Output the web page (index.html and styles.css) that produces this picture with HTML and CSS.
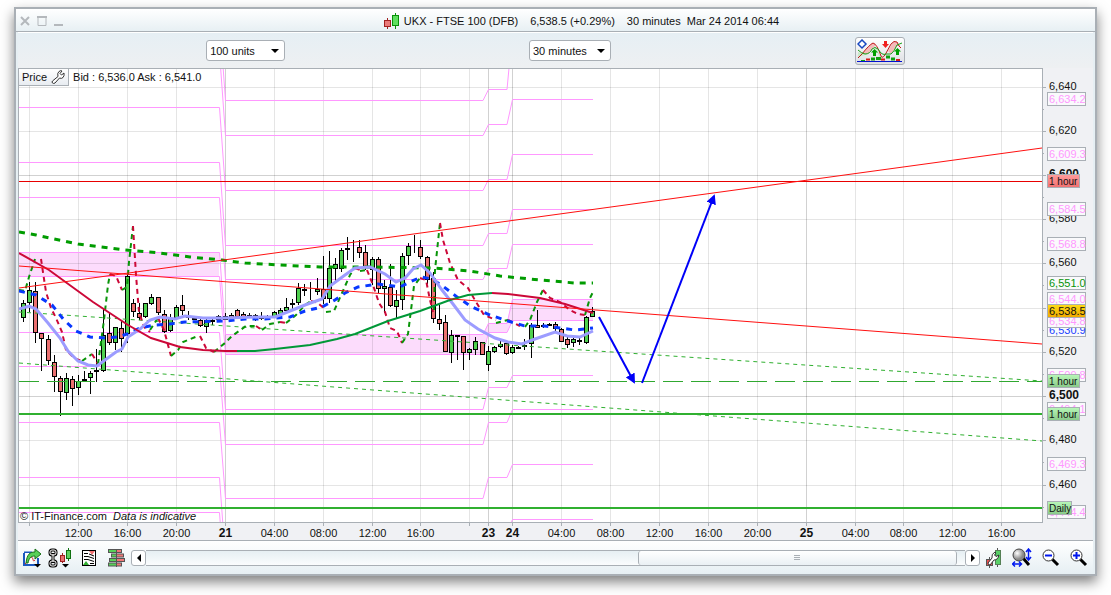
FILE: index.html
```html
<!DOCTYPE html>
<html lang="en">
<head>
  <meta charset="UTF-8" />
  <meta name="viewport" content="width=device-width, initial-scale=1.0" />
  <title>UKX - FTSE 100 (DFB)</title>
  <link rel="stylesheet" href="styles.css">
</head>
<body>
  <div class="window">
    <header class="titlebar">
      <div class="window-buttons">
        <button aria-label="Close"><svg width="10" height="10"><path d="M1 1L9 9M9 1L1 9" stroke-width="2" /></svg></button>
        <button aria-label="Maximize"><svg width="10" height="10"><path d="M1 .5V9.500H9V.5M.5 1H9.500" stroke-width="1" /><path d="M0 1H10" stroke-width="2" /></svg></button>
        <button aria-label="Minimize"><svg width="10" height="10"><path d="M0 9H9" stroke-width="2" /></svg></button>
      </div>
      <h1>
        <svg width="16" height="16">
          <path d="M3.500 5V16" stroke="#a02020" />
          <rect x=".5" y="7.500" width="6" height="6" fill="#ea7a7a" stroke="#a02020" />
          <path d="M11.500 0V16" stroke="#089008" />
          <rect x="8.500" y="2.500" width="6" height="10" fill="#5ee05e" stroke="#089008" />
        </svg>
        <span>UKX - FTSE 100 (DFB)</span>
        <span>6,538.5 (+0.29%)</span>
        <span>30 minutes&nbsp; Mar 24 2014 06:44</span>
      </h1>
    </header>

    <div class="toolbar">
      <div class="select units">
        <select aria-label="Units">
          <option>100 units</option>
          <option>200 units</option>
        </select>
      </div>
      <div class="select period">
        <select aria-label="Period">
          <option>30 minutes</option>
          <option>1 hour</option>
        </select>
      </div>
      <button class="indicators" aria-label="Indicators">
        <svg width="46" height="24" viewBox="0 0 46 24">
          <path d="M1 13L7 15L11 15L15 10L18 7L24 18L29 15L24 20L17 8L11 15L5 17L1 18Z" fill="#c8e8c8" />
          <path d="M5 15L15 4L19 5L17 8L11 15L8 15ZM31 12L36 3L40 3L43 7L40 7L36 13L34 15Z" fill="#f4baba" />
          <path d="M1 19L5 15Q12 6 16 4Q20 5 24 17Q25 20 28 16L34 5Q37 1 40 3Q42 8 44 9" fill="none" stroke="#c01818" />
          <path d="M1 11Q4 14 8 15Q13 15 15 10Q18 7 21 10Q25 17 29 15L34 15Q37 13 40 6L45 4" fill="none" stroke="#18a018" />
          <path d="M1 5L5 1L9 5L5 9Z" fill="#fff" stroke="#1848c0" stroke-width="1.5" />
          <path d="M17.500 10L21 13.500H19V17H16V13.500H14ZM40.500 9L44 12.500H42V16H39V12.500H37Z" fill="#00a000" />
          <path d="M27 2H30V5H32L28.500 9L25 5H27Z" fill="#f02020" />
          <path d="M14 20H18M19 19.500H24M29 18H33M34 20H38" stroke="#10a010" stroke-width="3" />
          <path d="M4 21.500H8" stroke="#10a010" />
          <path d="M9 20.500H13M24 20.500H28M39 21H43" stroke="#d81818" stroke-width="2" />
          <path d="M0 22.500H45" stroke="#0010d0" />
        </svg>
      </button>
    </div>

    <main class="chart-area">
      <svg id="chart" class="chart" viewBox="18 68 1075 472" role="img" aria-label="FTSE 100 price chart"></svg>
      <div class="price-bar">
        <button class="price-btn">Price
          <svg width="14" height="14" viewBox="0 0 14 14"><path d="M1.500 11L7 6.500Q6 3 8 1.500T11 1L9 3.500L10.500 5L13 3Q13.500 6 12 7.500T8.500 8L4 13Q2.500 14 1.500 13T1.500 11Z" fill="#fff" stroke="#333" /></svg>
        </button>
        <span>Bid : 6,536.0 Ask : 6,541.0</span>
      </div>
    </main>

    <footer class="bottombar">
      <button class="share" aria-label="Share">
        <svg width="20" height="20" viewBox="0 0 20 20">
          <path d="M1 5V17H15V10M1 4.500H9" fill="none" stroke="#1c58c0" stroke-width="2" />
          <path d="M2 5H10V16H2Z" fill="#fff" />
          <path d="M2 16C5 14 5 9 8 9S9 15 12 12" fill="none" stroke="#d02020" />
          <path d="M3 15C4 6 7 4 12 4V1L18 6L12 11V8C8 8 6 10 5 15Z" fill="#58d058" stroke="#187018" />
          <path d="M11 16H18L14.500 19.500Z" fill="#000" />
        </svg>
      </button>
      <button aria-label="Link charts">
        <svg width="24" height="20" viewBox="0 0 24 20">
          <g fill="none" stroke="#000" stroke-width="3"><rect x="2" y="2" width="6" height="5" rx="2" /><rect x="2" y="13" width="6" height="5" rx="2" /><path d="M5 5V15" /></g>
          <g fill="none" stroke="#fff"><rect x="2" y="2" width="6" height="5" rx="2" /><rect x="2" y="13" width="6" height="5" rx="2" /><path d="M5 6V14" /></g>
          <path d="M14.500 5V15" stroke="#a02020" /><rect x="12.500" y="7.500" width="4" height="6" fill="#ea7070" stroke="#a02020" />
          <path d="M20.500 0V13" stroke="#107010" /><rect x="18.500" y="2.500" width="4" height="8" fill="#5ed05e" stroke="#107010" />
          <path d="M14 16H21L17.500 19.500Z" fill="#000" />
        </svg>
      </button>
      <button aria-label="Order list">
        <svg width="15" height="18" viewBox="0 0 15 18">
          <rect x=".5" y="1.500" width="13" height="15" fill="#fff" stroke="#000" />
          <path d="M7 2H13L10 6Z" fill="#f07070" />
          <path d="M1 16L4 12L7 16Z" fill="#30b030" />
          <path d="M2 4.500H6M2 7.500H6L12 9.500M2 10.500H6L12 12.500M7 5L12 7M8 14.500H12" fill="none" stroke="#000" />
        </svg>
      </button>
      <button aria-label="Order book">
        <svg width="19" height="18" viewBox="0 0 19 18">
          <path d="M1 2H9M4 6.500H9M2 11H9M1 15.500H9" stroke="#555" stroke-width="4" />
          <path d="M10 2H15M10 6.500H17M10 11H18M10 15.500H15" stroke="#555" stroke-width="4" />
          <path d="M2 2H9M5 6.500H9M3 11H9M2 15.500H9" stroke="#58d058" stroke-width="2" />
          <path d="M10 2H14M10 6.500H16M10 11H17M10 15.500H14" stroke="#f07878" stroke-width="2" />
          <path d="M9.500 0V18" stroke="#555" />
        </svg>
      </button>
      <div class="scrollbar">
        <button class="arrow" aria-label="Scroll left"><svg width="6" height="8"><path d="M5 0V8L1 4Z" /></svg></button>
        <div class="track"><div class="thumb"><i></i></div></div>
        <button class="arrow" aria-label="Scroll right"><svg width="6" height="8"><path d="M1 0V8L5 4Z" /></svg></button>
      </div>
      <button aria-label="Chart settings">
        <svg width="16" height="20" viewBox="0 0 16 20">
          <path d="M3.500 9V20M11.500 0V19" stroke="#555" />
          <rect x=".5" y="11.500" width="6" height="6" fill="#e85050" stroke="#555" />
          <rect x="9.500" y="2.500" width="5" height="14" fill="#58d068" stroke="#558055" />
          <path d="M2 15L6 10Q5 6 9 4L10 5L8.500 7L10 8.500L13 7Q12 12 8 12L4 17Q2 17 2 15Z" fill="#fff" stroke="#333" />
        </svg>
      </button>
      <button aria-label="Fit zoom">
        <svg width="20" height="19" viewBox="0 0 20 19">
          <defs><radialGradient id="lens" cx=".35" cy=".35"><stop offset="0" stop-color="#fff" /><stop offset="1" stop-color="#888" /></radialGradient></defs>
          <path d="M11 10L17 17" stroke="#000" stroke-width="3" />
          <circle cx="7" cy="7" r="6" fill="url(#lens)" stroke="#444" />
          <path d="M1 16H9M3 13.500L.5 16L3 18.500M7 13.500L9.500 16L7 18.500M16.500 2V11M14 4L16.500 1L19 4M14 9L16.500 12L19 9" fill="none" stroke="#0018f0" stroke-width="1.500" />
        </svg>
      </button>
      <button aria-label="Zoom out">
        <svg width="18" height="18" viewBox="0 0 18 18"><path d="M10 10L16 16" stroke="#000" stroke-width="3" /><circle cx="6.500" cy="6.500" r="5.500" fill="#fff" stroke="#333" /><path d="M3 6.500H10" stroke="#0018f0" stroke-width="2" /></svg>
      </button>
      <button aria-label="Zoom in">
        <svg width="18" height="18" viewBox="0 0 18 18"><path d="M10 10L16 16" stroke="#000" stroke-width="3" /><circle cx="6.500" cy="6.500" r="5.500" fill="#fff" stroke="#333" /><path d="M3 6.500H10M6.500 3V10" stroke="#0018f0" stroke-width="2" /></svg>
      </button>
    </footer>
  </div>

  <script src="chart.js"></script>
</body>
</html>
```
FILE: chart.js
```js
// x, high, low, body top, body bottom, direction (1 = up)
const candles = [
  [23, 300, 322, 303, 317, 1], [29, 282, 312, 290, 302, 1], [35, 282, 343, 291, 332, 0],
  [41, 333, 371, 333, 338, 0], [48, 335, 365, 339, 360, 0], [54, 355, 392, 362, 376, 0],
  [60, 376, 416, 378, 391, 0], [66, 373, 400, 378, 392, 1], [72, 376, 406, 379, 388, 0],
  [78, 375, 395, 381, 387, 1], [84, 371, 382, 379, 380, 1], [90, 371, 394, 373, 377, 1],
  [96, 349, 382, 370, 371, 1], [103, 309, 372, 335, 370, 1], [109, 313, 345, 333, 342, 0],
  [115, 327, 350, 327, 342, 1], [121, 320, 352, 328, 338, 0], [127, 274, 343, 276, 333, 1],
  [133, 299, 317, 303, 311, 0], [139, 303, 320, 313, 317, 0], [145, 303, 318, 303, 316, 1],
  [151, 294, 305, 297, 303, 1], [158, 297, 315, 297, 312, 0], [164, 310, 333, 314, 331, 0],
  [170, 314, 332, 318, 330, 1], [176, 305, 318, 307, 317, 1], [182, 295, 315, 305, 310, 0],
  [188, 311, 320, 316, 317, 0], [194, 316, 320, 318, 319, 0], [200, 318, 327, 320, 325, 0],
  [206, 318, 333, 320, 326, 1], [212, 317, 325, 320, 321, 0], [218, 315, 321, 316, 319, 1],
  [225, 313, 320, 316, 319, 0], [231, 313, 320, 315, 317, 0], [237, 309, 317, 310, 316, 0],
  [243, 312, 318, 314, 317, 0], [249, 313, 318, 315, 317, 1], [255, 314, 321, 315, 317, 0],
  [261, 312, 320, 317, 318, 1], [267, 315, 319, 316, 317, 0], [274, 311, 318, 312, 317, 1],
  [280, 308, 315, 310, 314, 1], [286, 298, 312, 307, 310, 1], [292, 299, 310, 303, 304, 1],
  [298, 283, 305, 288, 302, 1], [304, 284, 296, 289, 290, 0], [310, 282, 300, 290, 290, 0],
  [317, 278, 295, 289, 291, 1], [323, 256, 304, 289, 298, 0], [329, 251, 303, 268, 298, 1],
  [335, 258, 282, 264, 268, 1], [341, 248, 272, 250, 268, 1], [347, 237, 260, 248, 249, 1],
  [353, 240, 262, 248, 248, 1], [359, 240, 258, 247, 252, 0], [365, 245, 270, 252, 266, 0],
  [372, 257, 285, 259, 269, 1], [378, 257, 293, 259, 288, 0], [384, 280, 313, 286, 288, 1],
  [390, 264, 307, 287, 305, 0], [396, 290, 318, 300, 306, 1], [402, 253, 310, 256, 299, 1],
  [408, 243, 265, 246, 255, 1], [414, 235, 253, 246, 246, 1], [420, 240, 259, 247, 256, 0],
  [427, 256, 284, 257, 279, 0], [433, 272, 323, 278, 318, 0], [439, 305, 330, 319, 323, 0],
  [445, 315, 352, 322, 351, 0], [451, 330, 363, 335, 352, 1], [457, 335, 360, 335, 336, 1],
  [463, 336, 370, 336, 352, 0], [469, 348, 360, 349, 352, 1], [475, 337, 355, 341, 349, 1],
  [482, 342, 355, 342, 354, 0], [488, 346, 371, 351, 364, 1], [494, 346, 353, 347, 351, 1],
  [500, 341, 348, 344, 346, 1], [506, 343, 355, 343, 353, 0], [512, 345, 354, 347, 352, 1],
  [518, 346, 349, 347, 348, 0], [524, 339, 350, 345, 346, 1], [531, 323, 358, 325, 343, 1],
  [537, 310, 328, 325, 327, 0], [543, 323, 328, 325, 326, 1], [549, 323, 326, 324, 325, 0],
  [555, 322, 331, 324, 328, 0], [561, 328, 342, 329, 341, 0], [567, 337, 348, 339, 344, 0],
  [573, 335, 347, 339, 342, 1], [579, 337, 345, 340, 341, 0], [586, 316, 344, 317, 342, 1],
  [592, 307, 316, 311, 316, 1]
];

// pivot levels for the four sessions: 20th, 21st, 23rd, 24th
const pivots = [
  [17, 100, 89, 30], [52, 135, 124, 99], [107, 190, 179, 154], [162, 245, 233, 209],
  [197, 279, 268, 244], [252, 334, 323, 299], [276, 354, 332, 320], [332, 409, 387, 375],
  [366, 444, 422, 409], [422, 498, 477, 464], [477, 560, 532, 519], [512, 595]
];

const times = [
  [29, ''], [78, '12:00'], [127, '16:00'], [176, '20:00'], [225, '21', 1], [274, '04:00'],
  [323, '08:00'], [372, '12:00'], [420, '16:00'], [469, ''], [488, '23', 1], [512, '24', 1],
  [561, '04:00'], [610, '08:00'], [659, '12:00'], [708, '16:00'], [757, '20:00'],
  [806, '25', 1], [855, '04:00'], [903, '08:00'], [952, '12:00'], [1001, '16:00']
];

const prices = [
  [87, '6,640'], [131, '6,620'], [175, '6,600', 1], [219, '6,580'], [263, '6,560'],
  [308, ''], [352, '6,520'], [396, '6,500', 1], [440, '6,480'], [485, '6,460']
];

// y, width, text, class
const tags = [
  [92, 38, '6,634.2', 'pivot'], [147, 38, '6,609.3', 'pivot'], [174, 32, '1 hour', 'red'],
  [202, 38, '6,584.5', 'pivot'], [237, 38, '6,568.8', 'pivot'], [276, 38, '6,551.0', 'up'],
  [323, 38, '6,530.9', 'blue'], [314, 38, '6,534.8', 'pivot'], [292, 38, '6,544.0', 'pivot'],
  [304, 38, '6,538.5', 'last'], [368, 38, '6,509.8', 'pivot'], [374, 32, '1 hour', 'green'],
  [402, 38, '6,494.1', 'pivot'], [407, 32, '1 hour', 'green'], [457, 38, '6,469.3', 'pivot'],
  [505, 38, '6,444.4', 'pivot'], [501, 24, 'Daily', 'green']
];

const slowAvg = '19,232 36,235 78,244 125,250 160,253 190,257 222,260 245,263 280,265 320,267 370,267 435,268 470,271 500,276 540,280 575,283 593,283';
const fastAvg = '19,309 29,306 36,309 48,323 60,338 68,351 78,361 88,365 97,366 105,360 116,352 122,349 128,337 140,329 150,320 160,317 175,319 185,316 203,318 225,318 260,317 275,317 290,311 305,305 322,299 330,286 345,275 355,268 370,267 385,274 396,282 405,278 413,269 421,265 430,273 442,290 453,304 465,320 478,329 495,338 508,342 522,344 535,339 555,332 567,336 580,337 593,331';
const midAvg = '19,291 36,295 52,305 64,320 76,331 90,337 105,338 118,337 130,333 140,328 155,325 170,324 185,322 225,321 245,319 265,319 290,317 305,311 322,307 335,300 345,293 358,287 378,284 400,287 410,282 421,277 432,279 444,287 457,297 472,307 490,315 508,321 525,326 545,326 560,328 575,330 593,328';
const trend = [
  ['19,253 49,270 93,302 128,325 151,338 180,347 203,350 225,351 237,351', 'fall'],
  ['237,351 255,351 275,349 310,345 337,339 355,334 388,321 420,311 450,300 468,295 492,293', 'rise'],
  ['492,293 508,294 540,298 565,304 593,313', 'fall']
];
// swings go up and down alternately, starting upwards
const swings = [
  '19,290 25,291 29,277 35,259', '41,259 46,292 51,308 56,318 62,332 66,350 74,358 82,361',
  '82,361 92,354', '92,354 98,364', '98,364 104,320 108,285 110,274', '110,274 116,276 122,290',
  '122,290 127,287 129,262 133,226', '133,226 136,275 139,312 144,327 150,332',
  '150,330 158,318', '158,318 164,330 171,356', '171,356 178,350 183,342 198,336',
  '200,336 206,348 214,352', '214,352 225,343 232,336 246,326 256,326', '256,326 262,330',
  '262,330 270,324 280,322', '280,322 286,323', '286,323 296,315 305,305 311,301',
  '311,301 318,303 326,310', '326,312 334,311 342,293 350,275 355,268', '355,268 360,270',
  '360,271 367,270', '367,270 373,285 379,303 385,312 390,328 397,331 402,343',
  '402,343 408,334 411,310 414,286 420,278', '420,278 426,280 430,300 433,312',
  '434,310 435,270 440,223', '440,223 443,240 450,263 458,280 468,288 476,302 484,315 496,320',
  '496,323 508,320', '508,320 520,326', '525,327 530,320 537,302 543,290',
  '543,290 550,298 560,302 570,310 578,314 585,315', '585,315 590,298 593,292'
];

const out = [];
const line = (x1, y1, x2, y2, cls) => out.push(`<line x1="${x1}" y1="${y1}" x2="${x2}" y2="${y2}" class="${cls}"/>`);
const poly = (points, cls) => out.push(`<polyline points="${points}" class="${cls}"/>`);
const rect = (x, y, w, h, cls) => out.push(`<rect x="${x}" y="${y}" width="${w}" height="${h}" class="${cls}"/>`);
const text = (x, y, str, cls) => out.push(`<text x="${x}" y="${y}" class="${cls}">${str}</text>`);

out.push(`<defs>
  <clipPath id="plot"><rect x="19" y="69" width="1023" height="453"/></clipPath>
  <linearGradient id="g-red" x2="0" y2="1"><stop stop-color="#ff9c9c"/><stop offset="1" stop-color="#f07070"/></linearGradient>
  <linearGradient id="g-green" x2="0" y2="1"><stop stop-color="#b8f8b8"/><stop offset="1" stop-color="#88c888"/></linearGradient>
  <linearGradient id="g-gold" x2="0" y2="1"><stop stop-color="#ffdc18"/><stop offset="1" stop-color="#f0a800"/></linearGradient>
  <marker id="head" viewBox="0 0 10 10" refX="8" refY="5" markerWidth="10" markerHeight="10" markerUnits="userSpaceOnUse" orient="auto"><path d="M0 0L10 5L0 10Z" fill="#0000f8"/></marker>
</defs>`);

rect(18.5, 68.5, 1024, 454, 'plot');
out.push('<g clip-path="url(#plot)">');

out.push('<path class="band" d="M19 252H219V276H19ZM225 334H483L488 323H507L512 299H593V320H512L507 332H488L483 354H225Z"/>');
prices.forEach(([y, , bold]) => line(19, y + .5, 1042, y + .5, bold ? 'grid day' : 'grid'));
times.forEach(([x, , bold]) => line(x + .5, 69, x + .5, 522, bold ? 'grid day' : 'grid'));

pivots.forEach(([a, b, c, d]) => {
  let pts = `19,${a + .5} 219.5,${a + .5} 225.5,${b + .5}`;
  if (c) pts += ` 483,${b + .5} 488.5,${c + .5} 507,${c + .5} 512.5,${d + .5} 593,${d + .5}`;
  poly(pts, 'pivot-line');
});

candles.forEach(([x, hi, lo, top, bottom, up]) => {
  line(x + .5, hi, x + .5, lo, 'wick');
  rect(x - 1.5, top + .5, 4, bottom - top, up ? 'up-body' : 'down-body');
});

line(19, 312, 1042, 381, 'channel');
line(19, 363, 1042, 441, 'channel');
line(19, 381.5, 1042, 381.5, 'support-dash');
line(19, 414, 1042, 414, 'support');
line(19, 508, 1042, 508, 'support');
swings.forEach((pts, i) => poly(pts, i % 2 ? 'swing down' : 'swing'));
poly(slowAvg, 'slow-avg');
poly(midAvg, 'mid-avg');
poly(fastAvg, 'fast-avg');
trend.forEach(([pts, cls]) => poly(pts, 'trend ' + cls));
line(19, 181.5, 1042, 181.5, 'resist level');
line(19, 288, 1042, 148, 'resist');
line(19, 266, 1042, 344, 'resist');
out.push('<line x1="599" y1="317" x2="634" y2="382" class="arrow-line" marker-end="url(#head)"/>');
out.push('<line x1="642" y1="383" x2="714" y2="196" class="arrow-line" marker-end="url(#head)"/>');
out.push('</g>');
out.push('<text x="20" y="520" class="label">© IT-Finance.com <tspan dx="3" font-style="italic">Data is indicative</tspan></text>');

prices.forEach(([y, str, bold]) => {
  line(1042, y + .5, 1046, y + .5, 'tick');
  line(1042, y + 22.5, 1044, y + 22.5, 'tick');
  text(1049, y + 3, str, bold ? 'label bold' : 'label');
});
times.forEach(([x, str, bold]) => {
  line(x + .5, 522, x + .5, 526, 'tick');
  text(x + .5, 537, str, bold ? 'label mid bold' : 'label mid');
});
tags.forEach(([y, w, str, cls]) => {
  rect(1047.5, y + .5, w, 13, 'tag ' + cls);
  text(1049, y + 11, str, (w < 38 ? 'note ' : 'label ') + cls + '-text');
});

document.getElementById('chart').innerHTML = out.join('');
```
FILE: styles.css
```css
:root {
  --frame: #a9afb5;
  --edge: #e6eff3;
  --panel: #f0f1f4;
}

* {
  box-sizing: border-box;
}

body {
  margin: 0;
  padding: 7px 14px 19px;
  background: #fff;
  color: #111;
  font: 11px/14px "Liberation Sans", Arial, sans-serif;
}

button {
  padding: 0;
  border: 0;
  background: none;
  color: inherit;
  font: inherit;
}

svg {
  display: block;
}

.window {
  padding: 0 2px;
  border: 2px solid var(--frame);
  background: var(--edge);
  box-shadow: 0 6px 12px rgba(0, 0, 0, 0.5);
}

.titlebar {
  display: flex;
  align-items: center;
  gap: 8px;
  height: 23px;
  margin: 0 -2px;
  padding: 0 4px;
  background: linear-gradient(#fff, var(--edge));
  box-shadow: inset 0 -1px var(--frame);
}

.window-buttons {
  display: flex;
  gap: 7px;
}

.window-buttons svg {
  fill: none;
  stroke: #b4b8bc;
}

.titlebar h1 {
  display: flex;
  flex: 1;
  justify-content: center;
  align-items: center;
  gap: 12px;
  margin: 0;
  font-size: 11px;
  font-weight: normal;
}

.titlebar h1 svg {
  margin-right: -8px;
}

.toolbar {
  display: flex;
  justify-content: space-between;
  align-items: center;
  height: 36px;
  padding: 0 17.5%;
  border-top: 1px solid #fff;
  background: linear-gradient(#e6eff4, #eef0f2);
}

.select {
  position: relative;
  width: 79px;
}

.select.period {
  width: 82px;
}

.select select {
  display: block;
  width: 100%;
  height: 21px;
  padding: 0 3px;
  border: 1px solid var(--frame);
  border-radius: 3px;
  background: #fff;
  color: #111;
  font: inherit;
  appearance: none;
}

.select::after {
  content: "";
  position: absolute;
  top: 9px;
  right: 6px;
  border: 4px solid transparent;
  border-top-color: #000;
  border-bottom: 0;
  pointer-events: none;
}

.indicators {
  width: 50px;
  height: 28px;
  padding: 1px;
  border: 1px solid var(--frame);
  border-radius: 3px;
  background: linear-gradient(#fff, #dddfe3);
}

.chart-area {
  position: relative;
  background: var(--panel);
}

.price-bar {
  position: absolute;
  top: 0;
  left: 0;
  display: flex;
  align-items: center;
  gap: 4px;
}

.price-btn {
  display: flex;
  align-items: center;
  gap: 4px;
  height: 18px;
  padding: 0 3px;
  border: 1px solid var(--frame);
  background: linear-gradient(#fff, #e8ecf1);
}

.chart {
  width: 100%;
  height: auto;
}

.chart text {
  font: 11px "Liberation Sans", Arial, sans-serif;
  fill: #111;
}

.chart .mid { text-anchor: middle; }
.chart .bold { font-weight: bold; font-size: 12px; }
.chart .note { font-size: 10px; }
.chart .pivot-text { fill: #ff98ff; }
.chart .up-text { fill: #089408; }
.chart .blue-text { fill: #2040ff; }

.plot { fill: #fff; stroke: var(--frame); }
.tick { stroke: var(--frame); }
.grid { stroke: #000; stroke-opacity: 0.1; }
.grid.day { stroke-opacity: 0.18; }
.band { fill: #fcdcfc; }

polyline {
  fill: none;
}

.pivot-line { stroke: #ff98ff; }
.wick { stroke: #000; }
.up-body { fill: #50d050; stroke: #000; }
.down-body { fill: #ea7070; stroke: #000; }
.channel { stroke: #30b030; stroke-dasharray: 4 4; }
.support-dash { stroke: #30a830; stroke-dasharray: 20 8; }
.support { stroke: #30b030; stroke-width: 2; }
.swing { stroke: #089408; stroke-width: 2; stroke-dasharray: 5 4; }
.swing.down { stroke: #cc0838; }
.slow-avg { stroke: #009c00; stroke-width: 3; stroke-dasharray: 6 6; }
.mid-avg { stroke: #0838ff; stroke-width: 3; stroke-dasharray: 6 6; }
.fast-avg { stroke: #9c9cff; stroke-width: 3; }
.trend { stroke-width: 2; }
.fall { stroke: #cc0838; }
.rise { stroke: #009838; }
.resist { stroke: #ff1010; }
.resist.level { stroke: #e80000; }
.arrow-line { stroke: #0000f8; stroke-width: 2; }

.tag { fill: #fafafc; stroke: var(--frame); }
.tag.red { fill: url(#g-red); }
.tag.green { fill: url(#g-green); }
.tag.last { fill: url(#g-gold); }

.bottombar {
  display: flex;
  align-items: center;
  gap: 10px;
  height: 34px;
  padding: 0 5px;
  border-top: 1px solid var(--frame);
  background: linear-gradient(#fff, var(--edge));
}

.share {
  margin-right: -5px;
}

.scrollbar {
  display: flex;
  flex: 1;
  height: 16px;
  margin-right: -4px;
  margin-left: -5px;
}

.arrow {
  display: grid;
  place-items: center;
  width: 15px;
  border: 1px solid var(--frame);
  border-radius: 3px;
  background: #fff;
}

.track {
  flex: 1;
  padding: 0 1% 0 58%;
  border: 1px solid var(--frame);
  border-width: 1px 0;
  background: linear-gradient(#e6eff3, #fafcfd);
}

.thumb {
  display: grid;
  place-items: center;
  height: 14px;
  border: 1px solid var(--frame);
  border-width: 0 1px;
  border-radius: 3px;
  background: linear-gradient(#fff, #eaf0f4);
}

.thumb i {
  width: 6px;
  height: 5px;
  border: 1px solid var(--frame);
  border-width: 1px 0;
  background: linear-gradient(transparent 1px, var(--frame) 1px, var(--frame) 2px, transparent 2px);
}
```
